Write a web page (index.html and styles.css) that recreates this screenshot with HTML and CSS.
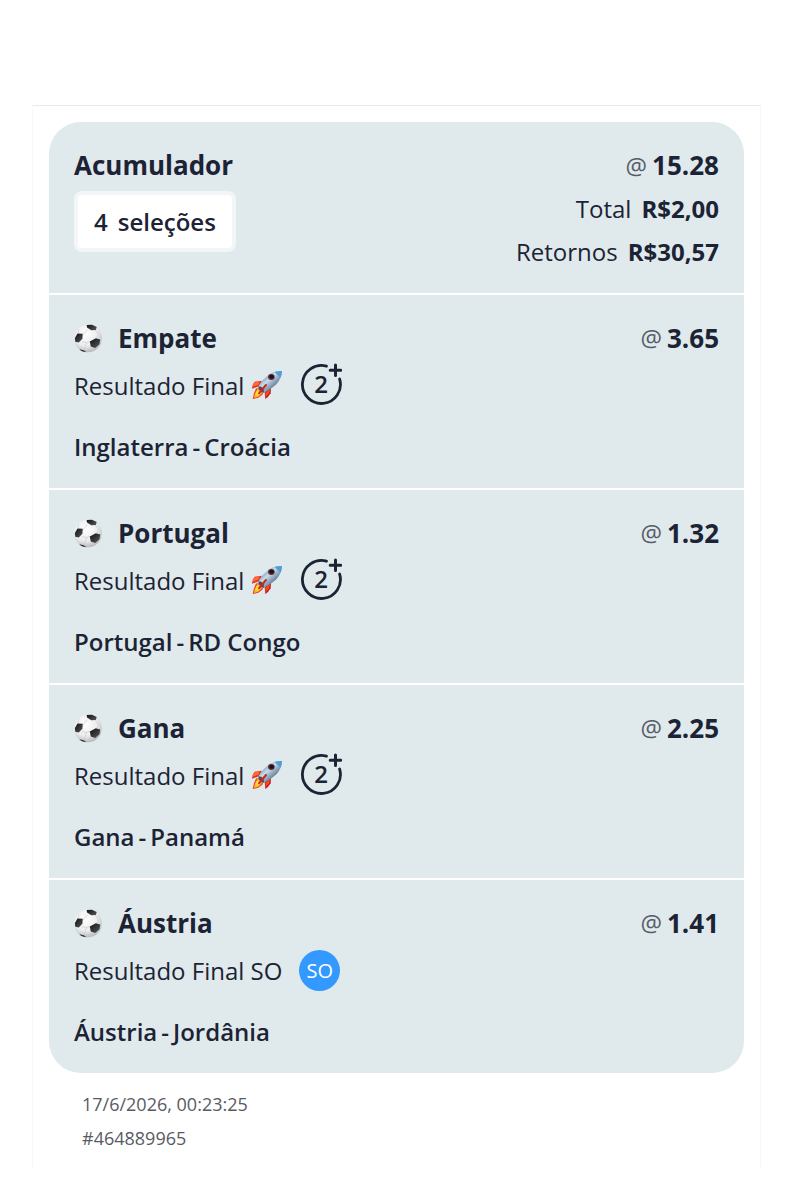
FILE: index.html
```html
<!DOCTYPE html>
<html lang="pt-BR">
  <head>
    <meta charset="UTF-8" />
    <meta name="viewport" content="width=device-width, initial-scale=1.0" />
    <title>Acumulador</title>
    <link rel="stylesheet" href="styles.css">
  </head>
  <body>
    <!-- shared icons -->
    <svg class="icon-defs" aria-hidden="true">
      <defs>
        <radialGradient id="ballShade" cx="42%" cy="35%" r="65%">
          <stop offset="0" stop-color="#ffffff" />
          <stop offset="0.65" stop-color="#ececec" />
          <stop offset="1" stop-color="#b9bbbd" />
        </radialGradient>
        <linearGradient id="patchShade" x1="0" y1="0" x2="1" y2="1">
          <stop offset="0" stop-color="#111214" />
          <stop offset="1" stop-color="#55585c" />
        </linearGradient>
        <linearGradient id="hullShade" x1="0" y1="0" x2="1" y2="1">
          <stop offset="0.2" stop-color="#4f8fbd" />
          <stop offset="0.42" stop-color="#c9dbe8" />
          <stop offset="0.62" stop-color="#7f9ab2" />
          <stop offset="0.85" stop-color="#35475e" />
        </linearGradient>
        <linearGradient id="flameShade" x1="1" y1="0" x2="0" y2="1">
          <stop offset="0" stop-color="#f58a1f" />
          <stop offset="0.5" stop-color="#ffe23c" />
          <stop offset="1" stop-color="#f6a21c" />
        </linearGradient>
      </defs>
      <symbol id="ball" viewBox="0 0 28 29">
        <circle cx="14" cy="14.5" r="13.8" fill="url(#ballShade)" />
        <g fill="none" stroke="#c2c4c6" stroke-width="0.6">
          <path d="M8.600 11.500L13.500 5.500M8 17.500l4.500 1 3.500-1M12.500 18.500L10 26M21.500 6l3 5-2.500 3.500M17 24l-4 4M4 9L5 5" />
        </g>
        <g fill="url(#patchShade)">
          <path d="M12.700 1l5.300-.3 4.700 2.300-.9 3-4.600.2-4.200-2.700z" />
          <path d="M3.500 9.500l5.200.2-.3 5-3.600 3.800-3.500-.7-.4-3.800z" />
          <path d="M15.800 17.500l6-3.300 4.400 1.200-.7 4.900-4.300 3.600-4.400-1.500z" />
          <path d="M5.200 25.200l4.500 1 3.200 2-3.600-.5q-2.500-1-4.100-2.500z" />
        </g>
      </symbol>
      <symbol id="rocket" viewBox="34 64 96 90">
        <path d="M50 119Q41 131 39 151Q58 149 70 136L64 120Z" fill="#ee4a24" />
        <path d="M54 121Q44 135 43 148Q58 146 68 131Z" fill="url(#flameShade)" />
        <path d="M67 96L45 99Q37 108 37 120L58 113Z" fill="#e5301d" />
        <path d="M60 98L43 102Q40 108 39 114L56 108Z" fill="#ff6b3a" />
        <path d="M94 117L93 134Q87 145 77 151L75 130Z" fill="#c9201a" />
        <path d="M91 122L77 133L78 145L88 134Z" fill="#f14a2b" />
        <path d="M127 67Q104 66 87 78Q68 92 56 113L57 121L66 131L73 132Q94 123 110 107Q125 91 127 67Z" fill="url(#hullShade)" />
        <path d="M127 67Q116 66 105 69Q113 80 123 87Q127 78 127 67Z" fill="#4f9fd6" />
        <path d="M56 113L57 121L66 131L73 132L72 122L65 114Z" fill="#574951" />
        <path d="M79 109L58 134" stroke="#c9281d" stroke-width="6" stroke-linecap="round" />
        <ellipse cx="95" cy="85" rx="10" ry="9" fill="#722c31" />
        <ellipse cx="96" cy="84" rx="7" ry="6" fill="#18151d" />
      </symbol>
      <symbol id="ring" viewBox="0 0 42 44">
        <path d="M26.500 3.200A19 19 0 1 0 39.600 16" fill="none" stroke="#1c2334" stroke-width="2.800" stroke-linecap="round" />
        <path d="M35.500 2v10.600M30.200 7.300h10.600" fill="none" stroke="#1c2334" stroke-width="3" stroke-linecap="round" />
      </symbol>
    </svg>

    <main class="receipt">
      <div class="card">
        <header class="summary">
          <div class="summary-left">
            <h1 class="summary-title">Acumulador</h1>
            <button type="button" class="selections-button"><span>4</span><span>seleções</span></button>
          </div>
          <div class="summary-right">
            <p class="odds"><span class="at">@</span> <strong>15.28</strong></p>
            <p class="amount">Total <strong>R$2,00</strong></p>
            <p class="amount">Retornos <strong>R$30,57</strong></p>
          </div>
        </header>

        <section class="selection">
          <div class="selection-head">
            <svg class="ball"><use href="#ball" /></svg>
            <h2 class="pick">Empate</h2>
            <p class="odds"><span class="at">@</span> <strong>3.65</strong></p>
          </div>
          <div class="market">
            <span>Resultado Final</span>
            <svg class="rocket"><use href="#rocket" /></svg>
            <svg class="two-up" viewBox="0 0 42 44"><use href="#ring" /><text x="21" y="30">2</text></svg>
          </div>
          <p class="event"><span>Inglaterra</span><span>-</span><span>Croácia</span></p>
        </section>

        <section class="selection">
          <div class="selection-head">
            <svg class="ball"><use href="#ball" /></svg>
            <h2 class="pick">Portugal</h2>
            <p class="odds"><span class="at">@</span> <strong>1.32</strong></p>
          </div>
          <div class="market">
            <span>Resultado Final</span>
            <svg class="rocket"><use href="#rocket" /></svg>
            <svg class="two-up" viewBox="0 0 42 44"><use href="#ring" /><text x="21" y="30">2</text></svg>
          </div>
          <p class="event"><span>Portugal</span><span>-</span><span>RD Congo</span></p>
        </section>

        <section class="selection">
          <div class="selection-head">
            <svg class="ball"><use href="#ball" /></svg>
            <h2 class="pick">Gana</h2>
            <p class="odds"><span class="at">@</span> <strong>2.25</strong></p>
          </div>
          <div class="market">
            <span>Resultado Final</span>
            <svg class="rocket"><use href="#rocket" /></svg>
            <svg class="two-up" viewBox="0 0 42 44"><use href="#ring" /><text x="21" y="30">2</text></svg>
          </div>
          <p class="event"><span>Gana</span><span>-</span><span>Panamá</span></p>
        </section>

        <section class="selection">
          <div class="selection-head">
            <svg class="ball"><use href="#ball" /></svg>
            <h2 class="pick">Áustria</h2>
            <p class="odds"><span class="at">@</span> <strong>1.41</strong></p>
          </div>
          <div class="market">
            <span>Resultado Final SO</span>
            <span class="so-badge">SO</span>
          </div>
          <p class="event"><span>Áustria</span><span>-</span><span>Jordânia</span></p>
        </section>
      </div>

      <footer class="meta">
        <p>17/6/2026, 00:23:25</p>
        <p>#464889965</p>
      </footer>
    </main>
  </body>
</html>
```
FILE: styles.css
```css
* {
  margin: 0;
  padding: 0;
  box-sizing: border-box;
}

body {
  font-family: "Open Sans", "Noto Sans", sans-serif;
  font-size: 24px;
  background: #ffffff;
  color: #1c2334;
}

.icon-defs {
  display: block;
  width: 0;
  height: 0;
}

.receipt {
  margin: 105px 32px 32px;
  padding: 16px 16px 12px;
  border: 1px solid #f8f8f9;
  border-top-color: #e9eaeb;
  border-bottom: none;
}

.card {
  display: flex;
  flex-direction: column;
  gap: 2px;
  border-radius: 32px;
  overflow: hidden;
}

.summary,
.selection {
  background: #e0e9ec;
}

.summary {
  display: flex;
  justify-content: space-between;
  padding: 22px 25px 20px;
  line-height: 43px;
}

.summary-title,
.pick {
  font-size: 26px;
  font-weight: 700;
}

.selections-button {
  display: flex;
  align-items: center;
  gap: 10px;
  height: 61px;
  margin-top: 4px;
  padding: 0 16px;
  border: 4px solid #f3f6f8;
  border-radius: 8px;
  background: #ffffff;
  color: inherit;
  font-family: inherit;
  font-size: 24px;
  font-weight: 600;
  cursor: pointer;
}

.summary-right {
  text-align: right;
}

.odds {
  display: flex;
  justify-content: flex-end;
  gap: 5px;
  font-size: 26px;
}

.at {
  font-size: 24px;
  color: #555c67;
}

.amount {
  display: flex;
  justify-content: flex-end;
  gap: 10px;
}

.selection {
  padding: 25px 25px 24px;
}

.selection-head {
  display: flex;
  align-items: center;
  line-height: 36px;
}

.ball {
  width: 28px;
  height: 29px;
  margin-right: 16px;
}

.selection-head .odds {
  margin-left: auto;
}

.market {
  display: flex;
  align-items: center;
  height: 44px;
  margin-top: 7px;
}

.rocket {
  width: 32px;
  height: 32px;
  margin: 0 17px 0 7px;
}

.two-up {
  width: 42px;
  height: 44px;
}

.two-up text {
  font-size: 24px;
  font-weight: 600;
  fill: #1c2334;
  text-anchor: middle;
}

.so-badge {
  width: 41px;
  height: 41px;
  margin-left: 17px;
  border-radius: 50%;
  background: #3399ff;
  color: #ffffff;
  font-size: 20px;
  line-height: 41px;
  text-align: center;
}

.event {
  display: flex;
  gap: 4px;
  margin-top: 23px;
  font-weight: 600;
  line-height: 34px;
}

.meta {
  margin-top: 14px;
  padding-left: 33px;
  color: #595b63;
  font-size: 18px;
  line-height: 34px;
}
```
